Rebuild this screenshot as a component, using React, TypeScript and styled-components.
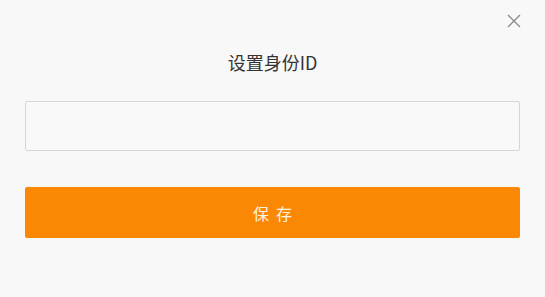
import React from "react";
import styled, { createGlobalStyle } from "styled-components";

const Global = createGlobalStyle`
  html, body {
    margin: 0;
    padding: 0;
    background: #f8f8f8;
    font-family: "Noto Sans CJK SC", "Noto Sans", sans-serif;
  }
`;

const Dialog = styled.div`
  position: relative;
  width: 545px;
  height: 297px;
  box-sizing: border-box;
  padding: 46px 25px 0 25px;
  background: #f8f8f8;
  display: flex;
  flex-direction: column;
`;

const Close = styled.button`
  position: absolute;
  top: 12px;
  right: 22px;
  width: 18px;
  height: 18px;
  padding: 0;
  border: none;
  background: transparent;
  cursor: pointer;
  display: flex;
  align-items: center;
  justify-content: center;
`;

const Title = styled.h2`
  margin: 0;
  height: 32px;
  line-height: 32px;
  text-align: center;
  font-size: 18px;
  font-weight: 400;
  color: #333;
`;

const Input = styled.input`
  margin-top: 23px;
  height: 50px;
  box-sizing: border-box;
  width: 100%;
  border: 1px solid #d6d6d6;
  border-radius: 2px;
  background: #f9f9f9;
  font-size: 15px;
  padding: 0 12px;
  outline: none;
`;

const SaveButton = styled.button`
  margin-top: 36px;
  height: 51px;
  width: 100%;
  border: none;
  border-radius: 2px;
  background: #fb8805;
  color: #fff3e0;
  font-family: "Noto Sans CJK SC", "Noto Sans", sans-serif;
  font-size: 16px;
  letter-spacing: 7px;
  text-indent: 7px;
  cursor: pointer;
`;

export default function App() {
  return (
    <>
      <Global />
      <Dialog>
        <Close aria-label="关闭">
          <svg width="14" height="14" viewBox="0 0 14 14">
            <path d="M1 1L13 13M13 1L1 13" stroke="#8a8a8a" strokeWidth="1.3" />
          </svg>
        </Close>
        <Title>设置身份ID</Title>
        <Input type="text" />
        <SaveButton>保存</SaveButton>
      </Dialog>
    </>
  );
}
